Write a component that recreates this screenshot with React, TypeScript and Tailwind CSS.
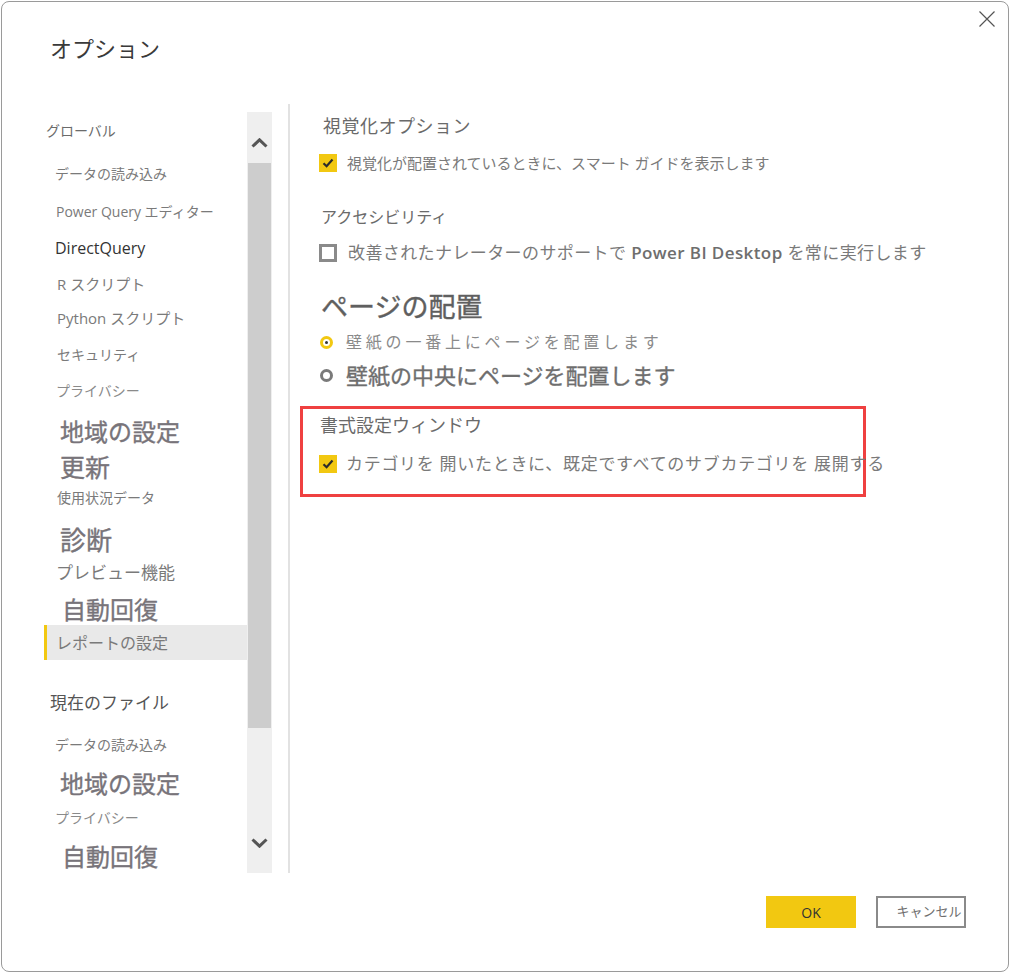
import React from "react";

const big = "font-normal [-webkit-text-stroke-width:0.35px] text-[#78747a]";

const navGlobal = [
  { text: "グローバル", cls: "text-[14px] text-[#6b6b6b] pl-[2px]", h: "h-[24px]", mt: "mt-[6px]" },
  { text: "データの読み込み", cls: "text-[14px] text-[#7a7a7a] pl-[11px]", h: "h-[24px]", mt: "mt-[19px]" },
  { text: "Power Query エディター", cls: "text-[14px] text-[#7a7a7a] pl-[12px]", h: "h-[24px]", mt: "mt-[14px]" },
  { text: "DirectQuery", cls: "text-[16px] text-[#333333] pl-[11px]", h: "h-[24px]", mt: "mt-[13px]" },
  { text: "R スクリプト", cls: "text-[15px] text-[#7a7a7a] pl-[13px]", h: "h-[24px]", mt: "mt-[12px]" },
  { text: "Python スクリプト", cls: "text-[15px] text-[#7a7a7a] pl-[13px]", h: "h-[24px]", mt: "mt-[10px]" },
  { text: "セキュリティ", cls: "text-[14px] text-[#7a7a7a] pl-[13px]", h: "h-[24px]", mt: "mt-[12px]" },
  { text: "プライバシー", cls: "text-[14px] text-[#8a8a8a] pl-[12px]", h: "h-[24px]", mt: "mt-[12px]" },
  { text: "地域の設定", cls: `text-[24px] ${big} pl-[16px]`, h: "h-[32px]", mt: "mt-[14px]" },
  { text: "更新", cls: `text-[25px] ${big} pl-[16px]`, h: "h-[32px]", mt: "mt-[4px]" },
  { text: "使用状況データ", cls: "text-[14px] text-[#7a7a7a] pl-[13px]", h: "h-[24px]", mt: "mt-[1px]" },
  { text: "診断", cls: `text-[26px] ${big} pl-[16px]`, h: "h-[32px]", mt: "mt-[15px]" },
  { text: "プレビュー機能", cls: "text-[17px] text-[#7a7a7a] pl-[12px]", h: "h-[24px]", mt: "mt-[5px]" },
  { text: "自動回復", cls: `text-[24px] ${big} pl-[18px]`, h: "h-[30px]", mt: "mt-[10px]" },
];

const navFile = [
  { text: "現在のファイル", cls: "text-[17px] text-[#555555] pl-[6px]", h: "h-[24px]", mt: "mt-[31px]" },
  { text: "データの読み込み", cls: "text-[14px] text-[#7a7a7a] pl-[11px]", h: "h-[24px]", mt: "mt-[17px]" },
  { text: "地域の設定", cls: `text-[24px] ${big} pl-[16px]`, h: "h-[32px]", mt: "mt-[12px]" },
  { text: "プライバシー", cls: "text-[14px] text-[#8a8a8a] pl-[11px]", h: "h-[24px]", mt: "mt-[5px]" },
  { text: "自動回復", cls: `text-[24px] ${big} pl-[18px]`, h: "h-[32px]", mt: "mt-[12px]" },
];

const Checked = () => (
  <span className="w-[18px] h-[18px] bg-[#f2c811] flex items-center justify-center shrink-0">
    <svg width="14" height="14" viewBox="0 0 14 14">
      <path d="M2.5 7.2 L5.6 10.2 L11.5 3.6" fill="none" stroke="#2b2b2b" strokeWidth="2.2" />
    </svg>
  </span>
);

const Unchecked = () => (
  <span className="w-[18px] h-[18px] border-[3px] border-[#8a8a8a] bg-white shrink-0" />
);

const Chevron = ({ up }: { up: boolean }) => (
  <svg width="17" height="10" viewBox="0 0 17 10">
    <path
      d={up ? "M1.5 8.5 L8.5 1.8 L15.5 8.5" : "M1.5 1.5 L8.5 8.2 L15.5 1.5"}
      fill="none"
      stroke="#555555"
      strokeWidth="3"
    />
  </svg>
);

const App = () => {
  return (
    <div className="w-[1011px] h-[974px] bg-white p-[1px] font-['Open_Sans','Noto_Sans_CJK_JP',sans-serif]">
      <div className="relative w-[1008px] h-[971px] border border-[#9a9a9a] rounded-[8px] bg-white flex flex-col">
        <div className="absolute right-[13px] top-[9px]">
          <svg width="16" height="16" viewBox="0 0 16 16">
            <path d="M0.5 0.5 L15.5 15.5 M15.5 0.5 L0.5 15.5" stroke="#555555" strokeWidth="1.2" />
          </svg>
        </div>

        <header className="h-[102px] pl-[48px] pt-[31px]">
          <h1 className="h-[30px] leading-[30px] text-[22px] text-[#3a3a3a]">オプション</h1>
        </header>

        <div className="flex h-[769px]">
          <div className="flex pl-[42px] pt-[8px] w-[286px]">
            <nav className="w-[203px] flex flex-col">
              {navGlobal.map((item) => (
                <div key={item.text + item.mt} className={`${item.h} ${item.mt} flex items-center whitespace-nowrap ${item.cls}`}>
                  {item.text}
                </div>
              ))}
              <div className="h-[35px] bg-[#e9e9e9] border-l-[3px] border-[#f2c811] pl-[9px] flex items-center text-[16px] text-[#7a7a7a]">
                レポートの設定
              </div>
              {navFile.map((item) => (
                <div key={item.text + item.mt} className={`${item.h} ${item.mt} flex items-center whitespace-nowrap ${item.cls}`}>
                  {item.text}
                </div>
              ))}
            </nav>
            <div className="w-[25px] h-[761px] bg-[#efefef] flex flex-col">
              <div className="h-[51px] pt-[26px] flex justify-center">
                <Chevron up={true} />
              </div>
              <div className="h-[565px] mx-[1px] bg-[#cdcdcd]" />
              <div className="flex-1 flex items-end justify-center pb-[25px]">
                <Chevron up={false} />
              </div>
            </div>
          </div>

          <div className="w-[2px] bg-[#e2e2e2]" />

          <main className="flex-1 pl-[29px] pt-[6px] flex flex-col">
            <div className="h-[32px] flex items-center pl-[4px] text-[18px] tracking-[0.5px] text-[#6a6a6a]">視覚化オプション</div>
            <div className="h-[26px] mt-[8px] flex items-center gap-[10px]">
              <Checked />
              <span className="text-[15px] text-[#7a7a7a] whitespace-nowrap">視覚化が配置されているときに、スマート ガイドを表示します</span>
            </div>

            <div className="h-[32px] mt-[25px] flex items-center pl-[2px] text-[16px] text-[#6a6a6a]">アクセシビリティ</div>
            <div className="h-[26px] mt-[7px] flex items-center gap-[11px]">
              <Unchecked />
              <span className="text-[17px] tracking-[0.4px] text-[#7a7a7a] whitespace-nowrap">
                改善されたナレーターのサポートで <span className="font-semibold text-[#6e6e6e] text-[17px]">Power BI Desktop</span> を常に実行します
              </span>
            </div>

            <div className="h-[34px] mt-[24px] flex items-center pl-[2px] text-[27px] [-webkit-text-stroke-width:0.4px] text-[#5f5f5f]">ページの配置</div>
            <div className="h-[24px] mt-[6px] flex items-center gap-[13px] pl-[1px]">
              <span className="w-[13px] h-[13px] rounded-full border-[3px] border-[#f2c811] flex items-center justify-center">
                <span className="w-[3px] h-[3px] rounded-full bg-[#333333]" />
              </span>
              <span className="text-[16px] tracking-[3.8px] text-[#8a8a8a] whitespace-nowrap">壁紙の一番上にページを配置します</span>
            </div>
            <div className="h-[26px] mt-[8px] flex items-center gap-[13px] pl-[1px]">
              <span className="w-[13px] h-[13px] rounded-full border-[3px] border-[#7a7a7a]" />
              <span className="text-[22px] [-webkit-text-stroke-width:0.35px] text-[#6e6e6e] whitespace-nowrap">壁紙の中央にページを配置します</span>
            </div>

            <section className="mt-[18px] -ml-[19px] w-[566px] h-[91px] border-[3px] border-[#ef4040] pl-[16px] pt-[2px] flex flex-col">
              <div className="h-[28px] flex items-center pl-[1px] text-[18px] text-[#6a6a6a]">書式設定ウィンドウ</div>
              <div className="h-[26px] mt-[12px] flex items-center gap-[9px]">
                <Checked />
                <span className="text-[17px] tracking-[0.7px] text-[#7a7a7a] whitespace-nowrap">カテゴリを 開いたときに、既定ですべてのサブカテゴリを 展開する</span>
              </div>
            </section>
          </main>
        </div>

        <footer className="mt-[23px] h-[32px] flex justify-end gap-[20px] pr-[42px]">
          <button className="w-[90px] h-[32px] bg-[#f2c811] text-[14px] text-[#333333]">OK</button>
          <button className="w-[90px] h-[32px] border-2 border-[#8a8a8a] bg-white pl-[16px] text-[13px] text-[#6e6e6e]">キャンセル</button>
        </footer>
      </div>
    </div>
  );
};

export default App;
